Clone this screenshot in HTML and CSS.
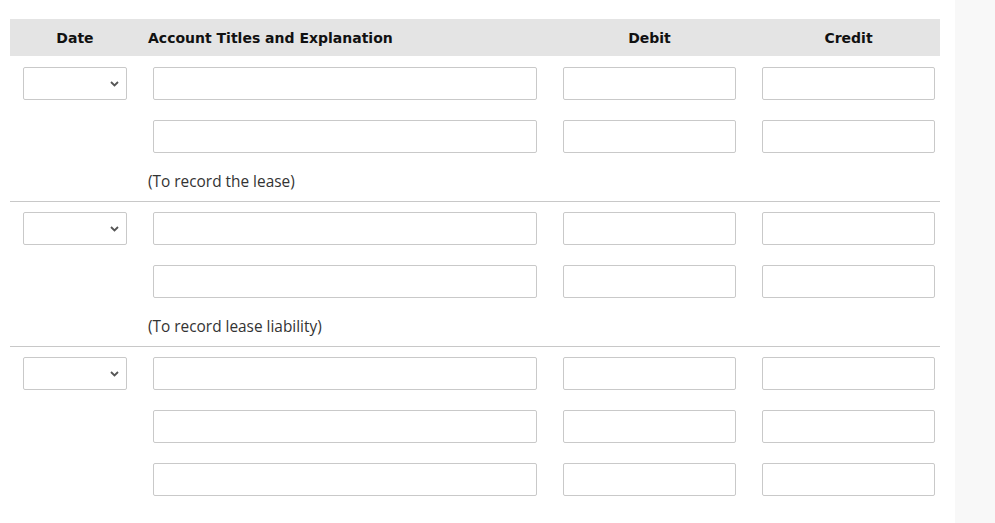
FILE: index.html
```html
<!DOCTYPE html>
<html>
<head>
<meta charset="utf-8">
<link rel="stylesheet" href="styles.css">
</head>
<body>
<div class="page">
  <main class="journal">
    <div class="row head">
      <div class="h-date">Date</div>
      <div class="h-acct">Account Titles and Explanation</div>
      <div class="h-num">Debit</div>
      <div class="h-num">Credit</div>
    </div>

    <section class="entry first">
      <div class="row">
        <div class="sel"><select></select><svg class="chev" width="9" height="6" viewBox="0 0 9 6"><path d="M1 1 L4.5 4.5 L8 1" fill="none" stroke="#555" stroke-width="1.8"/></svg></div>
        <input class="acct"><input class="num"><input class="num">
      </div>
      <div class="row">
        <div></div>
        <input class="acct"><input class="num"><input class="num">
      </div>
      <div class="note">(To record the lease)</div>
    </section>

    <section class="entry">
      <div class="row">
        <div class="sel"><select></select><svg class="chev" width="9" height="6" viewBox="0 0 9 6"><path d="M1 1 L4.5 4.5 L8 1" fill="none" stroke="#555" stroke-width="1.8"/></svg></div>
        <input class="acct"><input class="num"><input class="num">
      </div>
      <div class="row">
        <div></div>
        <input class="acct"><input class="num"><input class="num">
      </div>
      <div class="note">(To record lease liability)</div>
    </section>

    <section class="entry last">
      <div class="row">
        <div class="sel"><select></select><svg class="chev" width="9" height="6" viewBox="0 0 9 6"><path d="M1 1 L4.5 4.5 L8 1" fill="none" stroke="#555" stroke-width="1.8"/></svg></div>
        <input class="acct"><input class="num"><input class="num">
      </div>
      <div class="row">
        <div></div>
        <input class="acct"><input class="num"><input class="num">
      </div>
      <div class="row">
        <div></div>
        <input class="acct"><input class="num"><input class="num">
      </div>
    </section>
  </main>
  <aside class="side"></aside>
</div>
</body>
</html>
```
FILE: styles.css
```css
html, body {
  margin: 0;
  padding: 0;
  background: #fff;
}
.page {
  display: flex;
  height: 523px;
  overflow: hidden;
}
.journal {
  margin: 19px 0 0 10px;
  width: 930px;
  font-family: "Open Sans", "Noto Sans", sans-serif;
  color: #222;
}
.side {
  margin-left: 15px;
  flex: 1;
  background: #f8f8f8;
}
.row {
  display: grid;
  grid-template-columns: 104px 384px 173px 173px;
  column-gap: 26px;
  padding: 0 5px 0 13px;
  align-items: center;
}
.head {
  background: #e4e4e4;
  height: 37px;
  font-family: "DejaVu Sans", Verdana, sans-serif;
  font-weight: bold;
  font-size: 14px;
  color: #111;
}
.h-date { text-align: center; }
.h-acct { margin-left: -5px; }
.h-num { text-align: center; }
.entry {
  display: flex;
  flex-direction: column;
  gap: 20px;
  padding-top: 10px;
  border-bottom: 1px solid #c8c8c8;
}
.entry.first {
  padding-top: 11px;
}
.entry.last {
  border-bottom: none;
}
.entry input, .sel {
  box-sizing: border-box;
  height: 33px;
  border: 1px solid #c9c9c9;
  border-radius: 2px;
  background: #fff;
  margin: 0;
  padding: 0;
}
.sel {
  position: relative;
}
.sel select {
  appearance: none;
  border: none;
  background: transparent;
  width: 100%;
  height: 100%;
}
.chev {
  position: absolute;
  right: 7px;
  top: 13px;
}
.note {
  font-size: 15.4px;
  line-height: 20px;
  color: #333;
  padding: 0 0 9px 138px;
  margin-top: -1px;
}
```
